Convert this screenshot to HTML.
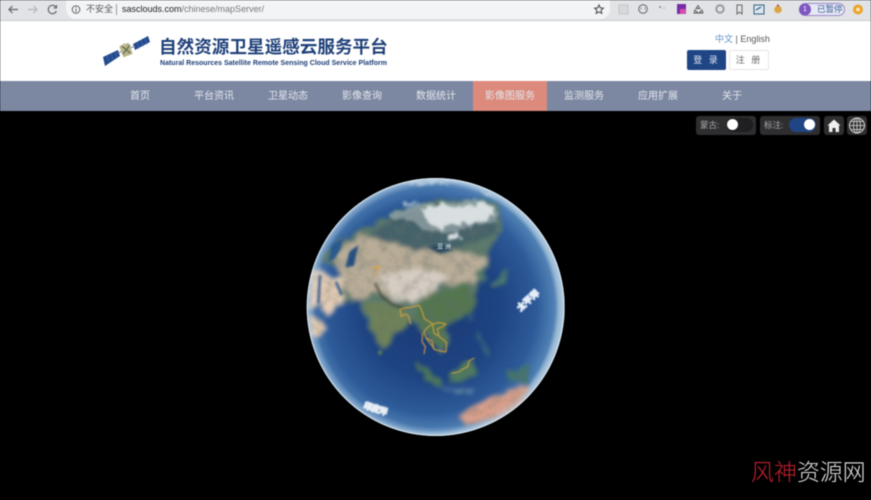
<!DOCTYPE html>
<html lang="zh"><head><meta charset="utf-8"><title>自然资源卫星遥感云服务平台</title>
<style>
*{box-sizing:border-box}
html,body{margin:0;padding:0}
body{width:871px;height:500px;overflow:hidden;background:#000;position:relative;font-family:"Liberation Sans","Noto Sans CJK SC",sans-serif}
.a{position:absolute;white-space:nowrap}
#wrap{position:absolute;left:0;top:0;width:871px;height:500px;filter:blur(.45px);overflow:hidden}
.nav{top:82px;height:30px;line-height:30px;width:74px;text-align:center;font-size:10px;color:#e3e6ec}
.tg{top:116px;height:19px;background:#2e2e30;border-radius:3px}
.ic{position:absolute}
</style></head><body><div id="wrap">
<div class="a" style="left:0;top:0;width:871px;height:20px;background:#e1e3e6"></div>
<div class="a" style="left:0;top:20px;width:871px;height:1px;background:#c9cacc"></div>
<div class="a" style="left:66px;top:0;width:544px;height:19px;background:#f3f4f5;border-radius:0 0 10px 10px"></div>
<svg class="ic" style="left:0;top:0" width="871" height="20" viewBox="0 0 871 20" fill="none">
<path d="M18 9.5H9M12.5 6L9 9.5 12.5 13" stroke="#5f6368" stroke-width="1.2"/>
<path d="M28 9.5H37M33.5 6L37 9.5 33.5 13" stroke="#b4b6b9" stroke-width="1.2"/>
<path d="M56 7.2A4.2 4.2 0 1 0 56.4 11M56.5 5V8H53.5" stroke="#5f6368" stroke-width="1.1"/>
<circle cx="76" cy="9.5" r="3.8" stroke="#5f6368"/><path d="M76 8.8V12M76 7V8" stroke="#5f6368"/>
<path d="M599 5l1.3 2.9 3.1.3-2.3 2.1.7 3.1-2.8-1.6-2.8 1.6.7-3.1-2.3-2.1 3.1-.3z" stroke="#444"/>
<rect x="619" y="5" width="9" height="9" stroke="#c4c6c8" fill="#d6d8da"/>
<circle cx="643" cy="9" r="4.3" stroke="#666"/><path d="M641 7.5v2M645 7.5v2" stroke="#666" stroke-width=".7"/>
<circle cx="660" cy="7" r="1" fill="#888"/><circle cx="664" cy="8" r=".8" fill="#aaa"/>
<rect x="677" y="4" width="9" height="10" fill="#7a2ca8"/><rect x="680" y="9" width="6" height="5" fill="#d04fae"/>
<path d="M698 5.5l2 3h-4zM695 10l-1 3h4zM702 10l1 3h-4z" stroke="#555" stroke-width=".9"/>
<circle cx="720" cy="9" r="3.7" stroke="#9b9b9b" stroke-width="2"/>
<path d="M737 5h5v9l-2.5-2-2.5 2z" stroke="#666"/>
<rect x="754" y="5" width="10" height="9" fill="#dbe6ee" stroke="#35607f"/><path d="M756 10l5-3" stroke="#35607f" stroke-width="1.3"/>
<circle cx="778" cy="9.5" r="3.8" fill="#dda447"/><circle cx="778" cy="5.5" r="1" fill="#a33"/>
<rect x="799.5" y="3.5" width="45" height="12" rx="6" fill="#e6e8f4" stroke="#9d88c8"/>
<circle cx="805" cy="9.5" r="6" fill="#7e57c2"/>
<circle cx="858" cy="9.5" r="5" fill="#eba42a"/><circle cx="858" cy="9.5" r="2" fill="#f8e2b4"/>
</svg>
<div class="a" style="left:86px;top:3px;font-size:9px;line-height:13px;color:#555">不安全</div>
<div class="a" style="left:116px;top:4px;width:1px;height:11px;background:#999"></div>
<div class="a" style="left:122px;top:3px;font-size:9px;line-height:13px;color:#777"><span style="color:#222">sasclouds.com</span>/chinese/mapServer/</div>
<div class="a" style="left:803px;top:4px;font-size:7px;line-height:11px;color:#fff">1</div>
<div class="a" style="left:817px;top:3px;font-size:8.5px;line-height:13px;color:#3a5a9a">已暂停</div>

<div class="a" style="left:0;top:21px;width:871px;height:60px;background:#fff"></div>
<svg class="ic" style="left:100px;top:33px" width="52" height="36" viewBox="0 0 52 36">
<path d="M3 24L18 17 20 23 5 33z" fill="#234a8e"/><path d="M33 11L48 3 50 9 35 17z" fill="#234a8e"/>
<path d="M7 22l2 7M11 20l2 7M15 18l2 7M37 9l2 7M41 7l2 7M45 5l2 7" stroke="#5a7cb6" stroke-width=".5"/>
<path d="M18 20L35 13" stroke="#889" stroke-width="1"/>
<rect x="21" y="11" width="10" height="12" rx="1" transform="rotate(-20 26 17)" fill="#b7b48c"/>
<path d="M22 13l8 7M23 21l7-9" stroke="#5e6a48" stroke-width="1.2"/>
<circle cx="24" cy="12" r="1.6" fill="#c8c090"/>
</svg>
<div class="a" style="left:159px;top:35px;font-size:17.6px;line-height:24px;font-weight:700;color:#1f4079">自然资源卫星遥感云服务平台</div>
<svg class="ic" style="left:159px;top:56px" width="232" height="12"><text x="1" y="9" font-size="7.6" font-weight="700" fill="#1f4079" textLength="227" lengthAdjust="spacingAndGlyphs" font-family="Liberation Sans">Natural Resources Satellite Remote Sensing Cloud Service Platform</text></svg>
<div class="a" style="left:715px;top:32px;font-size:9px;line-height:14px;color:#555"><span style="color:#5a8fc4">中文</span> | English</div>
<div class="a" style="left:687px;top:50px;width:39px;height:20px;background:#1f4584;border-radius:2px;color:#dfe6f2;font-size:9px;line-height:20px;text-align:center;letter-spacing:2px">登 录</div>
<div class="a" style="left:729px;top:50px;width:40px;height:20px;background:#fff;border:1px solid #e4e6ea;border-radius:2px;color:#666;font-size:9px;line-height:18px;text-align:center;letter-spacing:2px">注 册</div>

<div class="a" style="left:0;top:81px;width:871px;height:30px;background:#7c88a2"></div>
<div class="a" style="left:473px;top:81px;width:74px;height:30px;background:#dc8a7c"></div>
<div class="a nav" style="left:103px">首页</div><div class="a nav" style="left:177px">平台资讯</div><div class="a nav" style="left:251px">卫星动态</div><div class="a nav" style="left:325px">影像查询</div><div class="a nav" style="left:399px">数据统计</div><div class="a nav" style="left:473px">影像图服务</div><div class="a nav" style="left:547px">监测服务</div><div class="a nav" style="left:621px">应用扩展</div><div class="a nav" style="left:695px">关于</div>

<div class="a tg" style="left:696px;width:60px"></div>
<div class="a" style="left:700px;top:119px;font-size:8.5px;line-height:13px;color:#aaa">蒙古:</div>
<div class="a" style="left:726px;top:118px;width:27px;height:14px;border-radius:7px;background:#1f1f21"></div>
<div class="a" style="left:727px;top:119px;width:11px;height:11px;border-radius:50%;background:#fff"></div>
<div class="a tg" style="left:760px;width:60px"></div>
<div class="a" style="left:764px;top:119px;font-size:8.5px;line-height:13px;color:#aaa">标注:</div>
<div class="a" style="left:789px;top:118px;width:27px;height:14px;border-radius:7px;background:#1f4584"></div>
<div class="a" style="left:804px;top:119px;width:11px;height:11px;border-radius:50%;background:#fff"></div>
<div class="a" style="left:824px;top:116px;width:20px;height:19px;background:#2e2e30;border-radius:3px"></div>
<div class="a" style="left:847px;top:116px;width:20px;height:19px;background:#2e2e30;border-radius:3px"></div>
<svg class="ic" style="left:824px;top:116px" width="44" height="19" viewBox="0 0 44 19" fill="none">
<path d="M3.5 9.5L10 3.5 16.5 9.5H15V16H11.5V12H8.5V16H5V9.5z" fill="#eee"/>
<circle cx="33" cy="9.5" r="7.5" stroke="#ddd" stroke-width="1"/><ellipse cx="33" cy="9.5" rx="3.5" ry="7.5" stroke="#ddd" stroke-width=".8"/><path d="M25.5 9.5H40.5M33 2V17M27 5.5H39M27 13.5H39" stroke="#ddd" stroke-width=".8"/>
</svg>

<svg class="ic" style="left:300px;top:170px" width="270" height="270" viewBox="0 0 810 810">
<defs>
<radialGradient id="o" cx="48%" cy="50%" r="50%"><stop offset="0" stop-color="#1a3a74"/><stop offset=".55" stop-color="#1f4483"/><stop offset=".82" stop-color="#2d5a98"/><stop offset=".96" stop-color="#4f80b4"/><stop offset="1" stop-color="#8db0cf"/></radialGradient>
<radialGradient id="h" cx="50%" cy="50%" r="50%"><stop offset=".93" stop-color="#bcd3e6" stop-opacity="0"/><stop offset=".985" stop-color="#cfe0ee" stop-opacity=".45"/><stop offset="1" stop-color="#f0f6fa" stop-opacity=".95"/></radialGradient>
<filter id="land" x="-5%" y="-5%" width="110%" height="110%">
<feTurbulence type="fractalNoise" baseFrequency=".03" numOctaves="3" seed="7" result="n"/>
<feDisplacementMap in="SourceGraphic" in2="n" scale="30" xChannelSelector="R" yChannelSelector="G" result="d"/>
<feGaussianBlur in="d" stdDeviation="7" result="bl"/>
<feColorMatrix in="n" type="matrix" values="0 0 0 0 .12  0 0 0 0 .16  0 0 0 0 .14  .9 0 0 0 -.36" result="m"/>
<feComposite in="m" in2="bl" operator="in" result="mm"/>
<feMerge><feMergeNode in="bl"/><feMergeNode in="mm"/></feMerge>
</filter>
<filter id="cl" x="-5%" y="-5%" width="110%" height="110%">
<feTurbulence type="fractalNoise" baseFrequency=".05" numOctaves="3" seed="3" result="n"/>
<feDisplacementMap in="SourceGraphic" in2="n" scale="26" result="d"/>
<feGaussianBlur in="d" stdDeviation="4"/>
</filter>
<filter id="s" x="-20%" y="-20%" width="140%" height="140%"><feGaussianBlur stdDeviation="3"/></filter>
<filter id="t" x="-20%" y="-20%" width="140%" height="140%"><feGaussianBlur stdDeviation="1.2"/></filter>
<clipPath id="c"><circle cx="407" cy="411" r="386"/></clipPath>
</defs>
<circle cx="407" cy="411" r="387" fill="url(#o)"/>
<g clip-path="url(#c)">
<g filter="url(#land)">
<path d="M60 270L120 215 200 175 300 120 420 90 590 95 610 180 570 215 565 290 530 345 530 395 485 445 435 465 445 515 430 552 385 505 350 465 322 455 245 540 205 470 175 395 125 390 110 340 120 290z" fill="#5d7a6c"/>
<path d="M210 190L310 125 450 110 585 110 585 190 520 225 420 240 300 240 210 225z" fill="#44626a"/>
<path d="M100 250L180 195 270 215 350 240 470 245 560 262 535 330 470 345 420 335 395 375 300 395 230 365 170 395 125 350z" fill="#b9ad98"/>
<path d="M235 320L350 295 440 320 398 365 340 400 280 385z" fill="#d4ccc2"/>
<path d="M345 400L420 360 500 350 530 375 505 430 440 460 430 545 385 495 345 450z" fill="#53764f"/>
<path d="M200 395L285 400 335 448 245 535 210 470z" fill="#6f8259"/>
<path d="M345 575L380 590 432 650 410 652 365 615z" fill="#4e7758"/>
<path d="M452 610L520 565 528 600 482 642 455 632z" fill="#4f7a5d"/>
<path d="M622 605L690 590 680 640 625 632z" fill="#44746c"/>
<path d="M25 305L65 300 125 335 132 405 75 440 60 400 25 425z" fill="#e2ccb6"/>
<path d="M22 430L70 450 80 482 50 502 28 500z" fill="#dec6ae"/>
<path d="M475 742L550 692 630 662 672 645 692 660 662 712 590 745 500 767z" fill="#d59f8b"/>
<path d="M530 305L552 292 558 340 545 345zM582 345L615 290 620 325 592 360z" fill="#4e7a6c"/>
<path d="M530 480l15 25 20 40 10 30-20-25-25-50zM500 430l15 10-8 25z" fill="#3f6d80"/>
<path d="M410 652L480 660 530 660 480 670z" fill="#6d93ae"/>
</g>
<g filter="url(#s)">
<path d="M60 315L55 400M108 335L125 375" stroke="#2d5590" stroke-width="7" fill="none"/>
<path d="M148 245L175 225 162 288 136 292z" fill="#27507f"/>
<path d="M95 225L130 205 120 240 105 265 85 275z" fill="#2b5a8c"/>
<circle cx="240" cy="548" r="7" fill="#557a5e"/>
<path d="M225 340L245 380 280 405 310 415" stroke="#3d4436" stroke-width="8" fill="none" opacity=".65"/>
<path d="M380 230L430 225 460 240 420 250z" fill="#1e3a5a" opacity=".7"/>
</g>
<g filter="url(#cl)">
<path d="M265 135L360 100 430 100 540 90 592 110 585 155 510 172 440 190 370 180 335 150 280 150z" fill="#cfd6da" opacity=".42"/>
<path d="M365 118L420 100 490 112 540 95 582 112 575 145 520 160 460 165 420 178 380 155z" fill="#e6e9ea" opacity=".88"/>
<path d="M440 205L470 182 480 200 450 215z" fill="#dce2e6"/>
<path d="M305 100L355 90 345 102 312 110zM540 60L572 70 592 88 560 80zM290 35L400 27 500 35 360 45z" fill="#c8d6e2" opacity=".7"/>
</g>
<g fill="none" stroke="#dfa63c" stroke-width="3" filter="url(#t)" stroke-linejoin="round">
<path d="M212 296L240 288 226 312"/>
<path d="M300 418L312 414 332 412 358 406 368 428 373 446 398 462 418 458 438 462 428 470 412 476 416 498 440 518 438 546 418 542 402 538 396 512 378 504 372 484 388 468 398 462"/>
<path d="M300 418L304 440 316 432 326 438 332 462M368 488L366 515 376 530 372 552M454 610L476 606 490 596 504 590 506 574 524 564M398 462L402 490 416 498M378 504L404 538"/>
</g>
</g>
<circle cx="407" cy="411" r="387" fill="url(#h)"/>
<text x="432" y="236" font-size="19" fill="#dfe8f0" text-anchor="middle" font-family="Noto Sans CJK SC">亚 洲</text>
<text transform="translate(690 398) rotate(-42)" font-size="26" font-weight="700" fill="#e4eef7" stroke="#e4eef7" stroke-width="3.5" text-anchor="middle" font-family="Noto Sans CJK SC" filter="url(#t)">太平洋</text>
<text transform="translate(224 724) rotate(18)" font-size="24" font-weight="700" fill="#e6edf4" stroke="#e6edf4" stroke-width="4" text-anchor="middle" font-family="Noto Sans CJK SC" filter="url(#t)">印度洋</text>
</svg>
<div class="a" style="left:751px;top:454px;font-size:23px;line-height:32px;font-family:'Noto Sans CJK SC',sans-serif;font-weight:300;color:#e5e5e5;letter-spacing:-.1px"><span style="color:#c3202e">风神</span>资源网</div>
</div></body></html>
